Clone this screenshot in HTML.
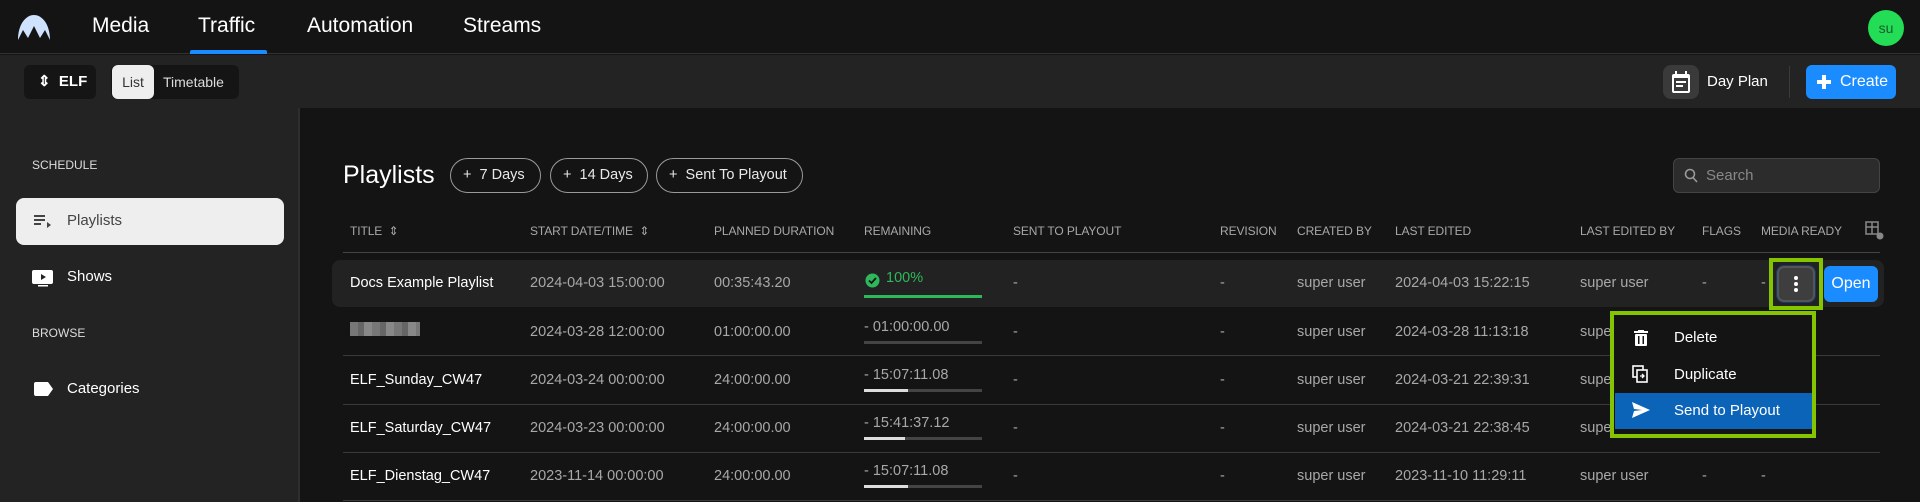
<!DOCTYPE html>
<html><head><meta charset="utf-8"><style>
*{box-sizing:border-box;margin:0;padding:0}
body{width:1920px;height:502px;overflow:hidden;background:#141414;font-family:"Liberation Sans",sans-serif;color:#fff;position:relative}
.a{position:absolute}
.nav{font-size:21px;top:14px;color:#fff}
.hdr{font-size:12px;color:#a8a8a8;top:224px;text-transform:uppercase;letter-spacing:-.1px}
.cell{font-size:14.5px;color:#a8a8a8;white-space:nowrap}
.t{color:#fff}
.chip{top:158px;height:35px;border:1px solid #9a9a9a;border-radius:18px;font-size:14.5px;line-height:33px;padding-left:12px;color:#e8e8e8}
.sep{left:343px;width:1537px;height:1px;background:#3a3a3a}
.bar{left:864px;width:118px;height:3px;background:#444}
</style></head><body>
<div class="a" style="left:0;top:0;width:1920px;height:54px;background:#141414;border-bottom:1px solid #333"></div>
<svg class="a" style="left:17px;top:14px" width="34" height="26" viewBox="0 0 34 26"><path d="M1 26 C1 10 9 1 17 1 C25 1 33 10 33 26 L28 16 L23 24 L17 12 L11 24 L6 16 Z" fill="#cfe3ff"/></svg>
<div class="a nav" style="left:92px">Media</div>
<div class="a nav" style="left:198px">Traffic</div>
<div class="a nav" style="left:307px">Automation</div>
<div class="a nav" style="left:463px">Streams</div>
<div class="a" style="left:190px;top:50px;width:77px;height:4px;background:#1a8cff;border-radius:2px 2px 0 0"></div>
<div class="a" style="left:1868px;top:10px;width:36px;height:36px;border-radius:50%;background:#22dd55;color:#1a5a2a;font-size:14px;line-height:36px;text-align:center">su</div>
<div class="a" style="left:0;top:55px;width:1920px;height:53px;background:#232323"></div>
<div class="a" style="left:24px;top:65px;width:72px;height:34px;background:#151515;border-radius:6px;font-size:15px;line-height:34px;padding-left:14px;font-weight:bold">⇕&nbsp; ELF</div>
<div class="a" style="left:111px;top:65px;width:128px;height:34px;background:#151515;border-radius:6px"></div>
<div class="a" style="left:112px;top:65px;width:42px;height:34px;background:#eee;border-radius:6px;color:#333;font-size:14px;line-height:34px;text-align:center">List</div>
<div class="a" style="left:163px;top:65px;font-size:14px;line-height:34px;color:#ddd">Timetable</div>
<div class="a" style="left:1663px;top:65px;width:36px;height:34px;background:#3a3a3a;border-radius:8px"></div>
<svg class="a" style="left:1670px;top:70px" width="22" height="24" viewBox="0 0 22 24"><rect x="2" y="4" width="18" height="19" rx="2" fill="#fff"/><rect x="5" y="1" width="2" height="5" fill="#fff"/><rect x="15" y="1" width="2" height="5" fill="#fff"/><rect x="4" y="8" width="14" height="13" fill="#3a3a3a"/><rect x="6" y="11" width="10" height="2" fill="#fff"/><rect x="6" y="15" width="7" height="2" fill="#fff"/></svg>
<div class="a" style="left:1707px;top:73px;font-size:15px">Day Plan</div>
<div class="a" style="left:1789px;top:66px;width:1px;height:32px;background:#3a3a3a"></div>
<div class="a" style="left:1806px;top:65px;width:90px;height:34px;background:#1a8cff;border-radius:6px;font-size:16px;line-height:34px;padding-left:34px">Create</div>
<div class="a" style="left:1817px;top:80px;width:14px;height:4px;background:#fff"></div>
<div class="a" style="left:1822px;top:75px;width:4px;height:14px;background:#fff"></div>
<div class="a" style="left:0;top:108px;width:300px;height:394px;background:#232323;border-right:2px solid #2e2e2e"></div>
<div class="a" style="left:32px;top:158px;font-size:12px;color:#ddd">SCHEDULE</div>
<div class="a" style="left:16px;top:198px;width:268px;height:47px;background:#eee;border-radius:8px"></div>
<svg class="a" style="left:34px;top:215px" width="18" height="14"><rect x="0" y="0" width="11" height="2" fill="#444"/><rect x="0" y="4" width="11" height="2" fill="#444"/><rect x="0" y="8" width="7" height="2" fill="#444"/><path d="M13 7 L17 10 L13 13Z" fill="#444"/></svg>
<div class="a" style="left:67px;top:212px;font-size:15px;color:#444">Playlists</div>
<svg class="a" style="left:32px;top:270px" width="22" height="17"><rect x="0" y="0" width="21" height="14" rx="2" fill="#fff"/><path d="M9 4 L14 7 L9 10Z" fill="#232323"/><rect x="6" y="15" width="10" height="1.5" fill="#fff"/></svg>
<div class="a" style="left:67px;top:268px;font-size:15px">Shows</div>
<div class="a" style="left:32px;top:326px;font-size:12px;color:#ddd">BROWSE</div>
<svg class="a" style="left:34px;top:382px" width="20" height="14"><path d="M2 0 H14 L19 7 L14 14 H2 Q0 14 0 12 V2 Q0 0 2 0Z" fill="#fff"/></svg>
<div class="a" style="left:67px;top:380px;font-size:15px">Categories</div>
<div class="a" style="left:343px;top:161px;font-size:25px">Playlists</div>
<div class="a chip" style="left:450px;width:91px">+&nbsp; 7 Days</div>
<div class="a chip" style="left:550px;width:98px">+&nbsp; 14 Days</div>
<div class="a chip" style="left:656px;width:147px">+&nbsp; Sent To Playout</div>
<div class="a" style="left:1673px;top:158px;width:207px;height:35px;background:#2c2c2c;border:1px solid #444;border-radius:6px"></div>
<svg class="a" style="left:1684px;top:168px" width="14" height="15"><circle cx="6" cy="6" r="4.5" stroke="#999" stroke-width="1.6" fill="none"/><path d="M9 9.5 L13 14" stroke="#999" stroke-width="1.6"/></svg>
<div class="a" style="left:1706px;top:167px;font-size:15px;color:#888">Search</div>
<div class="a hdr" style="left:350px">Title &nbsp;⇕</div>
<div class="a hdr" style="left:530px">Start Date/Time &nbsp;⇕</div>
<div class="a hdr" style="left:714px">Planned Duration</div>
<div class="a hdr" style="left:864px">Remaining</div>
<div class="a hdr" style="left:1013px">Sent To Playout</div>
<div class="a hdr" style="left:1220px">Revision</div>
<div class="a hdr" style="left:1297px">Created By</div>
<div class="a hdr" style="left:1395px">Last Edited</div>
<div class="a hdr" style="left:1580px">Last Edited By</div>
<div class="a hdr" style="left:1702px">Flags</div>
<div class="a hdr" style="left:1761px">Media Ready</div>
<svg class="a" style="left:1865px;top:221px" width="20" height="20"><rect x="1" y="1" width="12" height="12" fill="none" stroke="#888" stroke-width="1.5"/><path d="M1 6 H13 M7 1 V13" stroke="#888" stroke-width="1.5"/><circle cx="15" cy="15" r="3.5" fill="#888"/></svg>
<div class="a sep" style="top:252px;background:#444"></div>
<div class="a" style="left:332px;top:260px;width:1552px;height:47px;background:#222;border-radius:8px"></div>
<div class="a sep" style="top:355px"></div>
<div class="a sep" style="top:404px"></div>
<div class="a sep" style="top:452px"></div>
<div class="a sep" style="top:500px"></div>
<div class="a cell t" style="left:350px;top:275px">Docs Example Playlist</div>
<div class="a" style="left:350px;top:322px;width:70px;height:14px;background:repeating-linear-gradient(90deg,#777 0 8px,#666 8px 14px,#888 14px 22px)"></div>
<div class="a cell t" style="left:350px;top:372px">ELF_Sunday_CW47</div>
<div class="a cell t" style="left:350px;top:420px">ELF_Saturday_CW47</div>
<div class="a cell t" style="left:350px;top:468px">ELF_Dienstag_CW47</div>
<div class="a cell" style="left:530px;top:275px">2024-04-03 15:00:00</div>
<div class="a cell" style="left:530px;top:324px">2024-03-28 12:00:00</div>
<div class="a cell" style="left:530px;top:372px">2024-03-24 00:00:00</div>
<div class="a cell" style="left:530px;top:420px">2024-03-23 00:00:00</div>
<div class="a cell" style="left:530px;top:468px">2023-11-14 00:00:00</div>
<div class="a cell" style="left:714px;top:275px">00:35:43.20</div>
<div class="a cell" style="left:714px;top:324px">01:00:00.00</div>
<div class="a cell" style="left:714px;top:372px">24:00:00.00</div>
<div class="a cell" style="left:714px;top:420px">24:00:00.00</div>
<div class="a cell" style="left:714px;top:468px">24:00:00.00</div>
<svg class="a" style="left:865px;top:273px" width="15" height="15"><circle cx="7.5" cy="7.5" r="7" fill="#2eb85c"/><path d="M4 7.5 L6.5 10 L11 5" stroke="#141414" stroke-width="1.8" fill="none"/></svg>
<div class="a cell" style="left:886px;top:270px;color:#2eb85c">100%</div>
<div class="a bar" style="top:295px;background:#2eb85c"></div>
<div class="a cell" style="left:864px;top:319px">- 01:00:00.00</div><div class="a bar" style="top:341px"></div>
<div class="a cell" style="left:864px;top:367px">- 15:07:11.08</div><div class="a bar" style="top:389px;background:linear-gradient(90deg,#ddd 0 44px,#444 44px)"></div>
<div class="a cell" style="left:864px;top:415px">- 15:41:37.12</div><div class="a bar" style="top:437px;background:linear-gradient(90deg,#ddd 0 41px,#444 41px)"></div>
<div class="a cell" style="left:864px;top:463px">- 15:07:11.08</div><div class="a bar" style="top:485px;background:linear-gradient(90deg,#ddd 0 44px,#444 44px)"></div>
<div class="a cell" style="left:1013px;top:275px">-</div>
<div class="a cell" style="left:1013px;top:324px">-</div><div class="a cell" style="left:1013px;top:372px">-</div><div class="a cell" style="left:1013px;top:420px">-</div><div class="a cell" style="left:1013px;top:468px">-</div>
<div class="a cell" style="left:1220px;top:275px">-</div><div class="a cell" style="left:1220px;top:324px">-</div><div class="a cell" style="left:1220px;top:372px">-</div><div class="a cell" style="left:1220px;top:420px">-</div><div class="a cell" style="left:1220px;top:468px">-</div>
<div class="a cell" style="left:1297px;top:275px">super user</div><div class="a cell" style="left:1297px;top:324px">super user</div><div class="a cell" style="left:1297px;top:372px">super user</div><div class="a cell" style="left:1297px;top:420px">super user</div><div class="a cell" style="left:1297px;top:468px">super user</div>
<div class="a cell" style="left:1395px;top:275px">2024-04-03 15:22:15</div><div class="a cell" style="left:1395px;top:324px">2024-03-28 11:13:18</div><div class="a cell" style="left:1395px;top:372px">2024-03-21 22:39:31</div><div class="a cell" style="left:1395px;top:420px">2024-03-21 22:38:45</div><div class="a cell" style="left:1395px;top:468px">2023-11-10 11:29:11</div>
<div class="a cell" style="left:1580px;top:275px">super user</div><div class="a cell" style="left:1580px;top:324px">super user</div><div class="a cell" style="left:1580px;top:372px">super user</div><div class="a cell" style="left:1580px;top:420px">super user</div><div class="a cell" style="left:1580px;top:468px">super user</div>
<div class="a cell" style="left:1702px;top:275px">-</div><div class="a cell" style="left:1702px;top:468px">-</div>
<div class="a cell" style="left:1761px;top:275px">-</div><div class="a cell" style="left:1761px;top:468px">-</div>
<div class="a" style="left:1769px;top:258px;width:54px;height:52px;border:4px solid #84c400"></div>
<div class="a" style="left:1777px;top:266px;width:38px;height:36px;background:#3e3e3e;border:2px solid #555;border-radius:7px;box-shadow:0 0 0 1px #123a66"></div>
<div class="a" style="left:1794px;top:276px;width:4px;height:4px;border-radius:50%;background:#fff;box-shadow:0 6px 0 #fff,0 12px 0 #fff"></div>
<div class="a" style="left:1824px;top:266px;width:54px;height:36px;background:#1a8cff;border-radius:6px;font-size:16px;line-height:36px;text-align:center">Open</div>
<div class="a" style="left:1610px;top:311px;width:206px;height:127px;border:4px solid #84c400;background:#141414"></div>
<div class="a" style="left:1615px;top:393px;width:197px;height:36px;background:#0b64b8"></div>
<svg class="a" style="left:1634px;top:330px" width="14" height="16"><rect x="0" y="1" width="14" height="2" fill="#fff"/><rect x="4" y="0" width="6" height="2" fill="#fff"/><rect x="1" y="4" width="12" height="12" rx="1" fill="#fff"/><rect x="4" y="6" width="1.5" height="8" fill="#141414"/><rect x="8.5" y="6" width="1.5" height="8" fill="#141414"/></svg>
<div class="a" style="left:1674px;top:329px;font-size:15px">Delete</div>
<svg class="a" style="left:1632px;top:365px" width="17" height="18"><rect x="1" y="1" width="10" height="11" fill="none" stroke="#fff" stroke-width="1.6"/><rect x="5" y="5" width="10" height="12" fill="#141414" stroke="#fff" stroke-width="1.6"/><path d="M8 11 H12 M10 9 L12 11 L10 13" stroke="#fff" stroke-width="1.3" fill="none"/></svg>
<div class="a" style="left:1674px;top:366px;font-size:15px">Duplicate</div>
<svg class="a" style="left:1632px;top:402px" width="18" height="16"><path d="M0 0 L18 8 L0 16 L2 9 L10 8 L2 7Z" fill="#fff"/></svg>
<div class="a" style="left:1674px;top:402px;font-size:15px">Send to Playout</div>
</body></html>
